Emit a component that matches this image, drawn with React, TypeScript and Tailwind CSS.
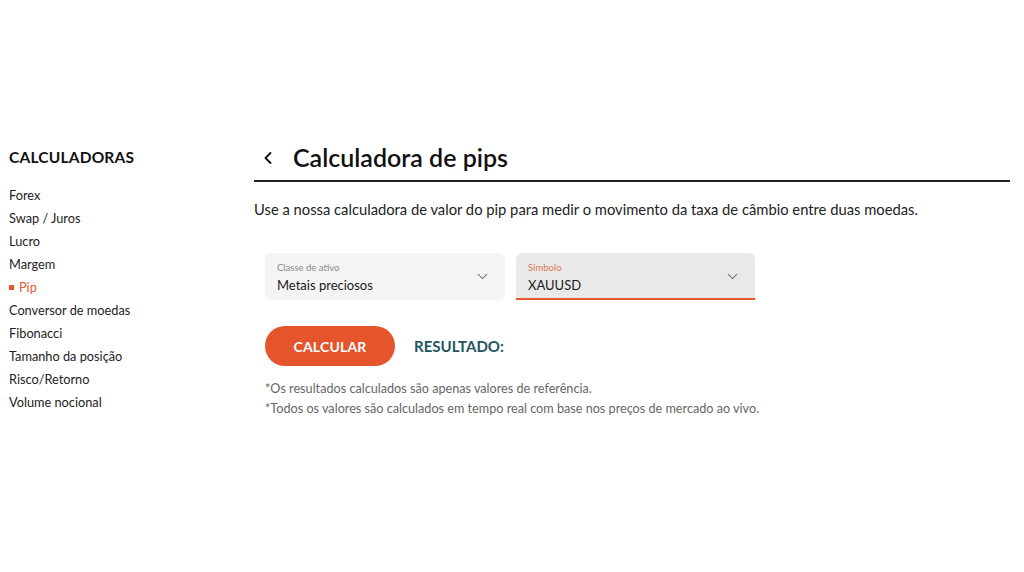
import { ChevronDown, ChevronLeft } from 'lucide-react'

const menu = [
  'Forex',
  'Swap / Juros',
  'Lucro',
  'Margem',
  'Pip',
  'Conversor de moedas',
  'Fibonacci',
  'Tamanho da posição',
  'Risco/Retorno',
  'Volume nocional',
]

function Sidebar() {
  return (
    <aside className="w-[245px] shrink-0">
      <h2 className="text-[15.5px] leading-5 font-bold text-[#111] tracking-[0.2px]">CALCULADORAS</h2>
      <ul className="mt-[17px]">
        {menu.map((item) =>
          item === 'Pip' ? (
            <li key={item} className="h-[23px] flex items-center text-[12.75px] text-[#e8582d]">
              <span className="w-[5px] h-[5px] bg-[#e8582d] mr-[5px]" />
              {item}
            </li>
          ) : (
            <li key={item} className="h-[23px] flex items-center text-[12.75px] text-[#222]">
              {item}
            </li>
          )
        )}
      </ul>
    </aside>
  )
}

function Select({ label, value, active }: { label: string; value: string; active?: boolean }) {
  return (
    <div
      className={
        active
          ? 'w-[239px] h-[47px] rounded-t-[6px] bg-[#e9e9e9] border-b-2 border-[#e8582d] pl-3 pr-[14px] flex justify-between'
          : 'w-[240px] h-[47px] rounded-[6px] bg-[#f4f4f4] pl-3 pr-[14px] flex justify-between'
      }
    >
      <div className="pt-[9px]">
        <div className={active ? 'text-[9.5px] leading-3 text-[#e07a58]' : 'text-[9.5px] leading-3 text-[#888]'}>
          {label}
        </div>
        <div className="text-[13px] leading-5 mt-[1px] text-[#1a1a1a]">{value}</div>
      </div>
      <ChevronDown size={17} strokeWidth={1.5} className="text-[#777] mt-[15px]" />
    </div>
  )
}

export default function App() {
  return (
    <div className="w-[1024px] h-[572px] bg-white font-['Lato','Liberation_Sans',sans-serif] overflow-hidden">
      <div className="flex pl-[9px] pt-[147px]">
        <Sidebar />
        <main className="w-[756px]">
          <div className="h-[26px] flex items-center border-b-2 border-[#222] pb-[9px] box-content -mt-[2px]">
            <ChevronLeft size={20} strokeWidth={2.2} className="text-[#111] ml-[4px]" />
            <h1 className="ml-[15px] text-[25px] font-semibold text-[#111]">Calculadora de pips</h1>
          </div>
          <p className="mt-[17px] text-[14.75px] leading-5 text-[#222]">
            Use a nossa calculadora de valor do pip para medir o movimento da taxa de câmbio entre duas moedas.
          </p>
          <div className="mt-[34px] ml-[11px] flex gap-[11px]">
            <Select label="Classe de ativo" value="Metais preciosos" />
            <Select label="Símbolo" value="XAUUSD" active />
          </div>
          <div className="mt-[26px] ml-[11px] flex items-center">
            <button className="w-[130px] h-[40px] rounded-full bg-[#e5552b] text-white text-[14px] font-bold tracking-[0.2px]">
              CALCULAR
            </button>
            <span className="ml-[19px] text-[15px] font-bold text-[#1f5560]">RESULTADO:</span>
          </div>
          <div className="mt-[13px] ml-[11px] text-[12.65px] leading-5 text-[#666]">
            <p>*Os resultados calculados são apenas valores de referência.</p>
            <p>*Todos os valores são calculados em tempo real com base nos preços de mercado ao vivo.</p>
          </div>
        </main>
      </div>
    </div>
  )
}
